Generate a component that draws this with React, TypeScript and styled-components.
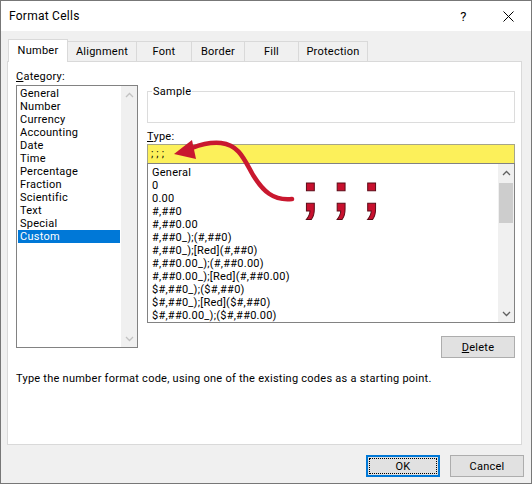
import React from "react";
import styled, { createGlobalStyle } from "styled-components";

const GlobalStyle = createGlobalStyle`
  html, body {
    margin: 0;
    padding: 0;
    background: #ffffff;
  }
  body {
    font-family: Roboto, "Segoe UI", sans-serif;
    font-size: 11px;
    letter-spacing: 0.25px;
    color: #000;
  }
`;

const Window = styled.div`
  position: relative;
  width: 532px;
  height: 484px;
  box-sizing: border-box;
  border: 1px solid #777777;
  background: #f0f0f0;
  display: flex;
  flex-direction: column;
  overflow: hidden;
`;

const TitleBar = styled.div`
  height: 30px;
  flex: none;
  background: #ffffff;
  display: flex;
  align-items: center;
  padding-left: 8px;
`;

const Title = styled.div`
  flex: 1;
  font-size: 12px;
`;

const TitleButton = styled.div`
  width: 45px;
  height: 30px;
  display: flex;
  align-items: center;
  justify-content: center;
  font-size: 13px;
`;

const TabStrip = styled.div`
  display: flex;
  align-items: flex-end;
  height: 22px;
  margin-top: 8px;
  padding-left: 8px;
  position: relative;
  z-index: 1;
  flex: none;
`;

const Tab = styled.div<{ $active?: boolean; $width: number }>`
  box-sizing: border-box;
  width: ${(p) => p.$width}px;
  height: ${(p) => (p.$active ? 23 : 20)}px;
  margin-left: -1px;
  margin-bottom: ${(p) => (p.$active ? -1 : 0)}px;
  border: 1px solid #d9d9d9;
  border-bottom: none;
  background: ${(p) => (p.$active ? "#ffffff" : "#f0f0f0")};
  display: flex;
  align-items: center;
  justify-content: center;
  padding-bottom: ${(p) => (p.$active ? 2 : 0)}px;
`;

const Panel = styled.div`
  box-sizing: border-box;
  height: 384px;
  flex: none;
  margin: 0 9px 0 6px;
  background: #ffffff;
  border: 1px solid #d9d9d9;
  padding: 8px 6px 0 8px;
  display: grid;
  grid-template-columns: 122px 368px;
  column-gap: 9px;
  align-content: start;
`;

const Column = styled.div<{ $top?: number }>`
  display: flex;
  flex-direction: column;
  padding-top: ${(p) => p.$top ?? 0}px;
`;

const Label = styled.div<{ $gap?: number }>`
  line-height: 13px;
  height: 13px;
  margin-top: ${(p) => p.$gap ?? 0}px;
`;

const ListBox = styled.div<{ $height: number; $gap?: number }>`
  box-sizing: border-box;
  height: ${(p) => p.$height}px;
  margin-top: ${(p) => p.$gap ?? 0}px;
  border: 1px solid #828282;
  background: #ffffff;
  display: flex;
`;

const ListItems = styled.div<{ $pad: number }>`
  flex: 1;
  padding: ${(p) => p.$pad}px 1px 0 1px;
  overflow: hidden;
`;

const ListItem = styled.div<{ $selected?: boolean; $indent: number }>`
  height: 13px;
  line-height: 13px;
  white-space: nowrap;
  padding-left: ${(p) => p.$indent}px;
  background: ${(p) => (p.$selected ? "#0078d7" : "transparent")};
  color: ${(p) => (p.$selected ? "#ffffff" : "#000000")};
`;

const ScrollBar = styled.div`
  width: 16px;
  flex: none;
  background: #f0f0f0;
  display: flex;
  flex-direction: column;
`;

const ScrollArrow = styled.div`
  height: 17px;
  flex: none;
  display: flex;
  align-items: center;
  justify-content: center;
`;

const ScrollTrack = styled.div`
  flex: 1;
  padding: 2px 1px 0;
`;

const ScrollThumb = styled.div`
  height: 40px;
  background: #cdcdcd;
`;

const GroupBox = styled.fieldset`
  box-sizing: border-box;
  height: 38px;
  margin: 0;
  padding: 0;
  min-inline-size: 0;
  border: 1px solid #dcdcdc;
`;

const Legend = styled.legend`
  padding: 0 1px;
  margin-left: 4px;
  line-height: 13px;
  font-size: 11px;
`;

const TypeInput = styled.div`
  box-sizing: border-box;
  height: 19px;
  margin-top: 1px;
  border: 1px solid #a6a58a;
  border-bottom: none;
  background: #fcf05a;
  padding-left: 3px;
  line-height: 18px;
  letter-spacing: 3px;
`;

const ButtonRow = styled.div`
  display: flex;
  justify-content: flex-end;
  margin-top: 13px;
`;

const Button = styled.div<{ $default?: boolean }>`
  box-sizing: border-box;
  width: 74px;
  height: 22px;
  background: #e1e1e1;
  border: ${(p) => (p.$default ? "2px solid #0078d7" : "1px solid #adadad")};
  display: flex;
  align-items: center;
  justify-content: center;
  padding: ${(p) => (p.$default ? "1px" : "0")};
`;

const FocusRing = styled.div`
  flex: 1;
  align-self: stretch;
  border: 1px dotted #000000;
  display: flex;
  align-items: center;
  justify-content: center;
`;

const Description = styled.div`
  grid-column: 1 / -1;
  margin-top: 14px;
  line-height: 13px;
`;

const Footer = styled.div`
  display: flex;
  justify-content: flex-end;
  gap: 10px;
  padding: 10px 7px 0 0;
`;

const Semicolons = styled.div`
  position: absolute;
  left: 300px;
  top: 163px;
  font-family: "Liberation Sans", Arial, sans-serif;
  font-weight: bold;
  font-size: 56px;
  line-height: 1;
  letter-spacing: 12px;
  color: #c8102e;
  -webkit-text-stroke: 1px #5a0a16;
  pointer-events: none;
`;

const ArrowLayer = styled.svg`
  position: absolute;
  left: 0;
  top: 0;
  pointer-events: none;
`;

const Chevron = ({ up, color }: { up?: boolean; color: string }) => (
  <svg width="9" height="6" viewBox="0 0 9 6">
    <path
      d={up ? "M1 5 L4.5 1.5 L8 5" : "M1 1 L4.5 4.5 L8 1"}
      fill="none"
      stroke={color}
      strokeWidth="1.3"
    />
  </svg>
);

const categories = [
  "General",
  "Number",
  "Currency",
  "Accounting",
  "Date",
  "Time",
  "Percentage",
  "Fraction",
  "Scientific",
  "Text",
  "Special",
  "Custom",
];

const formats = [
  "General",
  "0",
  "0.00",
  "#,##0",
  "#,##0.00",
  "#,##0_);(#,##0)",
  "#,##0_);[Red](#,##0)",
  "#,##0.00_);(#,##0.00)",
  "#,##0.00_);[Red](#,##0.00)",
  "$#,##0_);($#,##0)",
  "$#,##0_);[Red]($#,##0)",
  "$#,##0.00_);($#,##0.00)",
];

const tabs = [
  { name: "Number", width: 60 },
  { name: "Alignment", width: 70 },
  { name: "Font", width: 56 },
  { name: "Border", width: 54 },
  { name: "Fill", width: 55 },
  { name: "Protection", width: 70 },
];

export default function App() {
  return (
    <>
      <GlobalStyle />
      <Window>
        <TitleBar>
          <Title>Format Cells</Title>
          <TitleButton>?</TitleButton>
          <TitleButton>
            <svg width="11" height="11" viewBox="0 0 11 11">
              <path d="M0.5 0.5 L10.5 10.5 M10.5 0.5 L0.5 10.5" stroke="#000" strokeWidth="1" />
            </svg>
          </TitleButton>
        </TitleBar>

        <TabStrip>
          {tabs.map((t, i) => (
            <Tab key={t.name} $active={i === 0} $width={t.width}>
              {t.name}
            </Tab>
          ))}
        </TabStrip>

        <Panel>
          <Column>
            <Label>
              <u>C</u>ategory:
            </Label>
            <ListBox $height={263} $gap={2}>
              <ListItems $pad={1}>
                {categories.map((c) => (
                  <ListItem key={c} $indent={2} $selected={c === "Custom"}>
                    {c}
                  </ListItem>
                ))}
              </ListItems>
              <ScrollBar>
                <ScrollArrow>
                  <Chevron up color="#c2c2c2" />
                </ScrollArrow>
                <ScrollTrack />
                <ScrollArrow>
                  <Chevron color="#c2c2c2" />
                </ScrollArrow>
              </ScrollBar>
            </ListBox>
          </Column>

          <Column $top={15}>
            <GroupBox>
              <Legend>Sample</Legend>
            </GroupBox>
            <Label $gap={7}>
              <u>T</u>ype:
            </Label>
            <TypeInput>;;;</TypeInput>
            <ListBox $height={160}>
              <ListItems $pad={2}>
                {formats.map((f) => (
                  <ListItem key={f} $indent={3}>
                    {f}
                  </ListItem>
                ))}
              </ListItems>
              <ScrollBar>
                <ScrollArrow>
                  <Chevron up color="#606060" />
                </ScrollArrow>
                <ScrollTrack>
                  <ScrollThumb />
                </ScrollTrack>
                <ScrollArrow>
                  <Chevron color="#606060" />
                </ScrollArrow>
              </ScrollBar>
            </ListBox>
            <ButtonRow>
              <Button>
                <span>
                  <u>D</u>elete
                </span>
              </Button>
            </ButtonRow>
          </Column>

          <Description>
            Type the number format code, using one of the existing codes as a starting point.
          </Description>
        </Panel>

        <Footer>
          <Button $default>
            <FocusRing>OK</FocusRing>
          </Button>
          <Button>Cancel</Button>
        </Footer>

        <ArrowLayer width="532" height="484" viewBox="0 0 532 484">
          <path
            d="M291 198 C272 200 262 190 252 174 C243 158 238 144 220 142 C210 141 201 143 191 147"
            fill="none"
            stroke="#c9182f"
            strokeWidth="4.5"
            strokeLinecap="round"
          />
          <polygon points="173,153 191,139 195,158" fill="#c9182f" />
        </ArrowLayer>

        <Semicolons>;;;</Semicolons>
      </Window>
    </>
  );
}
